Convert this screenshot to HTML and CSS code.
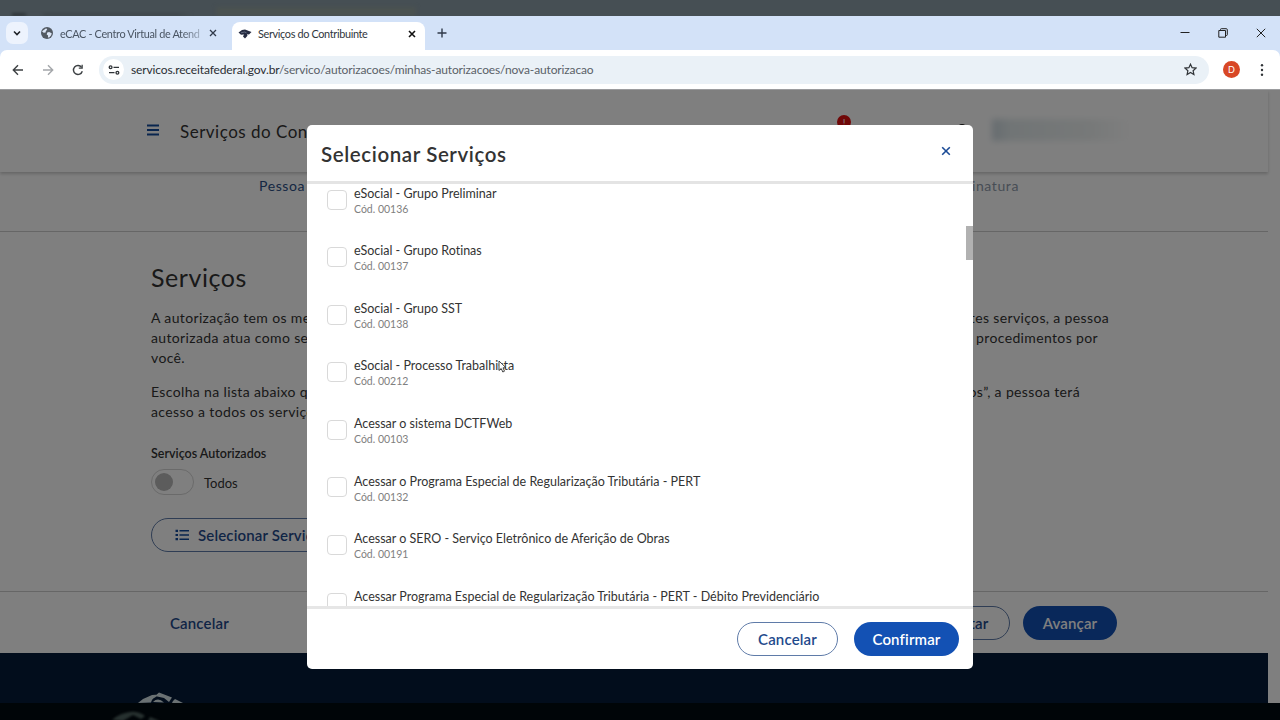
FILE: index.html
```html
<!DOCTYPE html>
<html lang="pt-BR">
<head>
    <meta charset="UTF-8">
    <meta name="viewport" content="width=device-width, initial-scale=1.0">
    <title>Serviços do Contribuinte</title>
    <link rel="stylesheet" href="styles.css">
</head>
<body>
    <div class="backdrop-top">
        <span class="ghost-tab"></span>
        <span class="ghost-tab ghost-active"></span>
    </div>

    <div class="browser">
        <div class="tabbar">
            <button class="tab-search">
                <svg width="10" height="10" viewBox="0 0 10 10"><path d="M2 3.5l3 3 3-3" fill="none" stroke="#1f2328" stroke-width="1.6"/></svg>
            </button>
            <div class="tab">
                <svg class="favicon" width="12" height="12" viewBox="0 0 12 12"><circle cx="6" cy="6" r="6" fill="#525a63"/><path d="M5.2 1.2l1 1.6-1.3 1.1-.3 1.5-2 .3L1 4.2M6.2 5.6l1.9-.5 2.6 1.1-.5 2-2 2.2-1.3.2.2-2.2-1.4-1z" fill="#dce6f6"/></svg>
                <span class="tab-title fade">eCAC - Centro Virtual de Atend</span>
                <svg class="tab-close" width="8" height="8" viewBox="0 0 8 8"><path d="M1 1l6 6M7 1L1 7" stroke="#303a4a" stroke-width="1.3"/></svg>
            </div>
            <div class="tab active">
                <svg class="favicon" width="14" height="12" viewBox="0 0 14 12"><path d="M.5 4.500L4 2l3-.5L13.500 4 11 6.500l-2-.3.500 1.500L7 10.500 5 8.500l1-2-3 .3z" fill="#262c42"/><path d="M3 4.800l3.500-.8 2 .8" stroke="#8791a3" stroke-width=".6" fill="none"/></svg>
                <span class="tab-title">Serviços do Contribuinte</span>
                <svg class="tab-close" width="8" height="8" viewBox="0 0 8 8"><path d="M1 1l6 6M7 1L1 7" stroke="#111" stroke-width="1.6"/></svg>
            </div>
            <svg class="new-tab" width="10" height="10" viewBox="0 0 10 10"><path d="M5 .5v9M.5 5h9" stroke="#303a4a" stroke-width="1.4"/></svg>
            <div class="window-buttons">
                <svg width="10" height="10" viewBox="0 0 10 10"><path d="M.5 4.500h9" stroke="#222" stroke-width="1"/></svg>
                <svg width="10" height="10" viewBox="0 0 10 10"><path d="M.8 2.500h6.700v6.700H.8zM2.500 2.500V1.500q0-.8.8-.8h5q1 0 1 1v5q0 .8-.8.8h-1" fill="none" stroke="#222"/></svg>
                <svg width="10" height="10" viewBox="0 0 10 10"><path d="M.8.800l8.400 8.400M9.200.800L.8 9.200" stroke="#222"/></svg>
            </div>
        </div>

        <div class="toolbar">
            <svg width="12" height="12" viewBox="0 0 12 12"><path d="M11 6H1.500M6 1.300L1.300 6 6 10.700" fill="none" stroke="#3c4043" stroke-width="1.400"/></svg>
            <svg width="12" height="12" viewBox="0 0 12 12"><path d="M1 6h9.500M6 1.300L10.700 6 6 10.700" fill="none" stroke="#a4a7aa" stroke-width="1.400"/></svg>
            <svg width="12" height="12" viewBox="0 0 12 12"><path d="M10.300 7.300A4.500 4.500 0 1 1 9.600 3.300" fill="none" stroke="#3c4043" stroke-width="1.400"/><path d="M10.800.8v4H6.800V3.500h2.700V.8z" fill="#3c4043"/></svg>
            <div class="address">
                <span class="site-info">
                    <svg width="12" height="10" viewBox="0 0 12 10"><g fill="none" stroke="#303438" stroke-width="1.300"><circle cx="2.600" cy="2.300" r="1.400"/><path d="M5.500 2.300H11M1 7.700h5.500"/><circle cx="9.400" cy="7.700" r="1.400"/></g></svg>
                </span>
                <span class="url"><b>servicos.receitafederal.gov.br</b>/servico/autorizacoes/minhas-autorizacoes/nova-autorizacao</span>
                <svg class="star" width="13" height="13" viewBox="0 0 13 13"><path d="M6.500 1.200l1.600 3.500 3.800.4-2.800 2.600.8 3.800-3.400-2-3.400 2 .8-3.800L1.100 5.100l3.800-.4z" fill="none" stroke="#303438" stroke-width="1.200"/></svg>
            </div>
            <span class="avatar">D</span>
            <svg class="more" width="4" height="14" viewBox="0 0 4 14"><g fill="#303438"><circle cx="2" cy="2.300" r="1.200"/><circle cx="2" cy="7" r="1.200"/><circle cx="2" cy="11.700" r="1.200"/></g></svg>
        </div>
    </div>

    <div class="page">
        <div class="site">
            <header class="site-header">
                <svg class="menu" width="12" height="12" viewBox="0 0 12 12"><path d="M0 1.500h12M0 6h12M0 10.500h12" stroke="#134a9c" stroke-width="2"/></svg>
                <span class="site-name">Serviços do Contribuinte</span>
                <span class="alert">!</span>
                <span class="user-icon"></span>
                <span class="user-name"></span>
            </header>

            <nav class="steps">
                <span class="step-first">Pessoa</span>
                <span class="step-last">Assinatura</span>
            </nav>

            <main class="content">
                <h1>Serviços</h1>
                <div class="text">
                    <p class="line w1"><span>A autorização tem os mesmos</span><span>destes serviços, a pessoa</span></p>
                    <p class="line w2"><span>autorizada atua como se fosse</span><span>procedimentos por</span></p>
                    <p class="line">você.</p>
                </div>
                <div class="text">
                    <p class="line w3"><span>Escolha na lista abaixo quais</span><span>“Todos”, a pessoa terá</span></p>
                    <p class="line">acesso a todos os serviços</p>
                </div>
                <div class="label">Serviços Autorizados</div>
                <div class="switch-row"><span class="switch"></span><span>Todos</span></div>
                <button class="btn outline select">
                    <svg width="14" height="12" viewBox="0 0 14 12"><path d="M4.500 1.800H14M4.500 6H14M4.500 10.200H14" stroke="#134a9c" stroke-width="1.600"/><path d="M.5 1.800H3M.5 6H3M.5 10.200H3" stroke="#134a9c" stroke-width="2.200"/></svg>
                    Selecionar Serviços
                </button>
            </main>

            <div class="actions">
                <button class="btn plain">Cancelar</button>
                <button class="btn outline back">Voltar</button>
                <button class="btn primary next">Avançar</button>
            </div>

            <footer class="site-footer">
                <svg width="46" height="11" viewBox="0 0 46 11"><path d="M0 11l5-4 9-4 7-.5-4 3q-3 1-4 5zM17 4l4-3.500 13 5-3 4.500-5-4zM15 10q5-5 11 .5zM35 9l2-2 8 4H34z" fill="#d5e2e6"/></svg>
            </footer>
        </div>

        <div class="overlay">
            <div class="modal">
                <div class="modal-header">
                    <h2>Selecionar Serviços</h2>
                    <svg width="10" height="10" viewBox="0 0 10 10"><path d="M1.200 1.200l7.600 7.600M8.800 1.200L1.200 8.800" stroke="#1b4b96" stroke-width="1.600"/></svg>
                </div>
                <div class="modal-body">
                    <label class="service"><i class="check"></i><span><span class="name">eSocial - Grupo Preliminar</span><small>Cód. 00136</small></span></label>
                    <label class="service"><i class="check"></i><span><span class="name">eSocial - Grupo Rotinas</span><small>Cód. 00137</small></span></label>
                    <label class="service"><i class="check"></i><span><span class="name">eSocial - Grupo SST</span><small>Cód. 00138</small></span></label>
                    <label class="service"><i class="check"></i><span><span class="name">eSocial - Processo Trabalhista</span><small>Cód. 00212</small></span></label>
                    <label class="service"><i class="check"></i><span><span class="name">Acessar o sistema DCTFWeb</span><small>Cód. 00103</small></span></label>
                    <label class="service"><i class="check"></i><span><span class="name">Acessar o Programa Especial de Regularização Tributária - PERT</span><small>Cód. 00132</small></span></label>
                    <label class="service"><i class="check"></i><span><span class="name">Acessar o SERO - Serviço Eletrônico de Aferição de Obras</span><small>Cód. 00191</small></span></label>
                    <label class="service"><i class="check"></i><span><span class="name">Acessar Programa Especial de Regularização Tributária - PERT - Débito Previdenciário</span></span></label>
                    <span class="scroll-thumb"></span>
                </div>
                <div class="modal-footer">
                    <button class="btn outline cancel">Cancelar</button>
                    <button class="btn primary confirm">Confirmar</button>
                </div>
            </div>
        </div>
    </div>

    <div class="backdrop-bottom">
        <svg width="54" height="11" viewBox="0 0 54 11"><path d="M0 9q8-7 18-8 8-1 15 4l-4 3-8-4-10 6zM38 6l10 4H36z" fill="#26302f"/></svg>
    </div>

    <svg class="cursor" width="9" height="13" viewBox="0 0 9 13"><path d="M1 1v9.500l2.200-2 1.600 3.500 1.700-.8L5 7.800h3z" fill="#fff" stroke="#333" stroke-width=".9"/></svg>
</body>
</html>
```
FILE: styles.css
```css
* {
    box-sizing: border-box;
}
body {
    margin: 0;
    height: 720px;
    display: flex;
    flex-direction: column;
    overflow: hidden;
    position: relative;
    background: #000;
    color: #333;
    font-family: Lato, "Open Sans", sans-serif;
    font-variant-ligatures: none;
}
button {
    font-family: inherit;
    padding: 0;
    border: none;
    background: none;
}
svg {
    flex-shrink: 0;
}
h1, h2, p {
    margin: 0;
}

/* browser window */
.backdrop-top {
    height: 16px;
    flex-shrink: 0;
    background: #464f54;
    display: flex;
    align-items: flex-end;
    overflow: hidden;
}
.ghost-tab {
    width: 180px;
    height: 3px;
    margin-left: 12px;
    background: linear-gradient(90deg, #2e3538 0 12px, #464f54 16px 28px, #3e474b 34px 165px, #464f54);
    filter: blur(1.5px);
}
.ghost-active {
    width: 200px;
    height: 9px;
    margin-left: 24px;
    background: #4b5250;
    filter: blur(2px);
}
.browser {
    flex-shrink: 0;
    background: #d3e2f8;
}
.tabbar {
    height: 34px;
    display: flex;
    align-items: center;
    padding: 0 14px 0 6px;
    font-size: 10.9px;
    letter-spacing: -0.35px;
}
.tab-search {
    width: 22px;
    height: 22px;
    border-radius: 7px;
    background: #edf3fd;
    display: flex;
    align-items: center;
    justify-content: center;
}
.tab {
    display: flex;
    align-items: center;
    width: 204px;
    height: 28px;
    padding: 0 15px 0 13px;
    color: #4a5563;
}
.tab.active {
    width: 193px;
    height: 28px;
    align-self: flex-end;
    padding: 0 9px 5px 6px;
    background: #fff;
    border-radius: 8px 8px 0 0;
    color: #30363d;
}
.tab-title {
    margin-left: 7px;
    flex: 1;
    white-space: nowrap;
}
.tab.active .tab-title {
    margin-left: 6px;
}
.fade {
    -webkit-mask-image: linear-gradient(90deg, #000 82%, rgba(0, 0, 0, 0.3) 95%);
}
.new-tab {
    margin-left: 12px;
}
.window-buttons {
    display: flex;
    gap: 28px;
    margin-left: auto;
}
.toolbar {
    height: 40px;
    display: flex;
    align-items: center;
    padding: 0 16px 0 12px;
    gap: 18px;
    background: #fff;
    border-bottom: 1px solid #9b9c9e;
    border-radius: 7px 7px 0 0;
}
.address {
    flex: 1;
    height: 28px;
    margin-left: -3px;
    display: flex;
    align-items: center;
    border-radius: 14px;
    background: #eaf1f7;
    padding: 0 12px 0 4px;
}
.site-info {
    width: 21px;
    height: 21px;
    border-radius: 50%;
    background: #fff;
    display: flex;
    align-items: center;
    justify-content: center;
}
.url {
    margin-left: 7px;
    flex: 1;
    font-size: 12px;
    letter-spacing: -0.14px;
    color: #5a6168;
}
.url b {
    font-weight: normal;
    color: #2a2e33;
}
.avatar {
    width: 17px;
    height: 17px;
    margin-left: -4px;
    border-radius: 50%;
    background: #d84726;
    color: #fff;
    font-size: 9px;
    line-height: 17px;
    text-align: center;
}
.more {
    margin-left: 2px;
}

/* page */
.page {
    height: 613px;
    flex-shrink: 0;
    position: relative;
    overflow: hidden;
    background: #fff;
}
.site {
    width: 1268px;
    height: 613px;
    display: flex;
    flex-direction: column;
}
.site-header {
    height: 82px;
    flex-shrink: 0;
    display: flex;
    align-items: center;
    padding-left: 147px;
    box-shadow: 0 2px 3px rgba(0, 0, 0, 0.2);
}
.menu {
    margin-bottom: 2px;
}
.site-name {
    margin-left: 21px;
    width: 657px;
    font-size: 17px;
    letter-spacing: 0.5px;
}
.alert {
    width: 14px;
    height: 14px;
    margin-bottom: 18px;
    border-radius: 50%;
    background: #e01010;
    color: #fff;
    font-size: 10px;
    line-height: 14px;
    text-align: center;
}
.user-icon {
    width: 8px;
    height: 8px;
    margin: 0 26px 6px 107px;
    border-radius: 50%;
    background: #222;
}
.user-name {
    width: 140px;
    height: 22px;
    margin-bottom: 3px;
    background: linear-gradient(90deg, #ccd8df, #e2eaec 12%, #eef2f2 70%, #fff);
    filter: blur(3px);
}
.steps {
    height: 60px;
    flex-shrink: 0;
    display: flex;
    justify-content: space-between;
    padding: 4px 249px 0 259px;
    border-bottom: 1px solid #ccc;
    font-size: 14px;
    line-height: 20px;
    letter-spacing: 0.6px;
    color: #2c4f86;
}
.step-last {
    color: #8f9bab;
}
.content {
    height: 359px;
    flex-shrink: 0;
    padding: 29px 0 0 151px;
}
h1 {
    font-size: 25px;
    line-height: 32px;
    font-weight: normal;
    letter-spacing: 0.55px;
    margin-bottom: 15px;
}
.text {
    font-size: 14px;
    letter-spacing: 0.36px;
    margin-bottom: 14px;
}
.line {
    display: flex;
    justify-content: space-between;
    height: 20px;
    line-height: 20px;
}
.w1 {
    width: 958px;
}
.w2 {
    width: 947px;
}
.w3 {
    width: 929px;
}
.label {
    margin-top: 24px;
    font-size: 12.5px;
    line-height: 16px;
    font-weight: 600;
}
.switch-row {
    display: flex;
    align-items: center;
    gap: 10px;
    margin-top: 7px;
    font-size: 13px;
}
.switch {
    width: 43px;
    height: 26px;
    border: 1px solid #d4d4d4;
    border-radius: 13px;
    padding: 3px;
}
.switch::before {
    content: "";
    display: block;
    width: 18px;
    height: 18px;
    border-radius: 50%;
    background: #b8b8b8;
}
.switch-row span + span {
    padding-top: 1px;
}
.btn {
    height: 34px;
    border-radius: 17px;
    font-size: 15px;
    font-weight: 600;
    letter-spacing: 0.15px;
    color: #1f4a8c;
}
.btn.outline {
    border: 1px solid #5f7ba8;
}
.btn.primary {
    background: #1351b4;
    color: #fff;
}
.select {
    display: flex;
    align-items: center;
    gap: 9px;
    width: 220px;
    margin-top: 23px;
    padding-left: 23px;
    white-space: nowrap;
}
.actions {
    height: 62px;
    flex-shrink: 0;
    display: flex;
    align-items: center;
    padding: 0 151px 0 170px;
    border-top: 1px solid #ccc;
}
.back {
    width: 92px;
    margin-left: auto;
    padding-left: 8px;
}
.next {
    width: 94px;
    margin-left: 13px;
}
.site-footer {
    flex: 1;
    background: #041a38;
    display: flex;
    align-items: flex-end;
    padding-left: 138px;
}
.site-footer svg {
    display: block;
}

/* modal */
.overlay {
    position: absolute;
    inset: 0;
    background: rgba(0, 0, 0, 0.5);
    padding: 35px 0 0 307px;
}
.modal {
    width: 666px;
    height: 544px;
    display: flex;
    flex-direction: column;
    border-radius: 5px;
    background: #fff;
    overflow: hidden;
}
.modal-header {
    height: 56px;
    flex-shrink: 0;
    display: flex;
    align-items: center;
    justify-content: space-between;
    padding: 3px 22px 0 14px;
}
.modal-header svg {
    margin-bottom: 7px;
}
h2 {
    padding-bottom: 1px;
    font-size: 20.5px;
    font-weight: 600;
    letter-spacing: 0.6px;
}
.modal-body {
    height: 428px;
    flex-shrink: 0;
    position: relative;
    overflow: hidden;
    padding: 3px 20px 0;
    border-top: 3px solid #e4e4e4;
    border-bottom: 3px solid #e6e6e6;
}
.service {
    display: flex;
    height: 57.6px;
    gap: 7px;
}
.check {
    width: 20px;
    height: 20px;
    margin-top: 2.5px;
    flex-shrink: 0;
    border: 1px solid #d9d9d9;
    border-radius: 4px;
    background: #fff;
}
.name {
    display: block;
    margin-top: -1.3px;
    font-size: 12.5px;
    line-height: 15px;
    white-space: nowrap;
}
.service small {
    display: block;
    margin-top: 1px;
    font-size: 10.5px;
    line-height: 14px;
    color: #808080;
}
.scroll-thumb {
    position: absolute;
    right: 0;
    top: 42px;
    width: 7px;
    height: 34px;
    background: #b1b1b1;
}
.modal-footer {
    flex: 1;
    display: flex;
    align-items: center;
    justify-content: flex-end;
    gap: 16px;
    padding-right: 14px;
}
.cancel {
    width: 101px;
}
.confirm {
    width: 105px;
}

.backdrop-bottom {
    height: 17px;
    flex-shrink: 0;
    padding: 8px 0 0 112px;
    background: #000508;
    overflow: hidden;
}
.backdrop-bottom svg {
    display: block;
    filter: blur(1px);
}
.cursor {
    position: absolute;
    left: 498px;
    top: 360px;
}
```
